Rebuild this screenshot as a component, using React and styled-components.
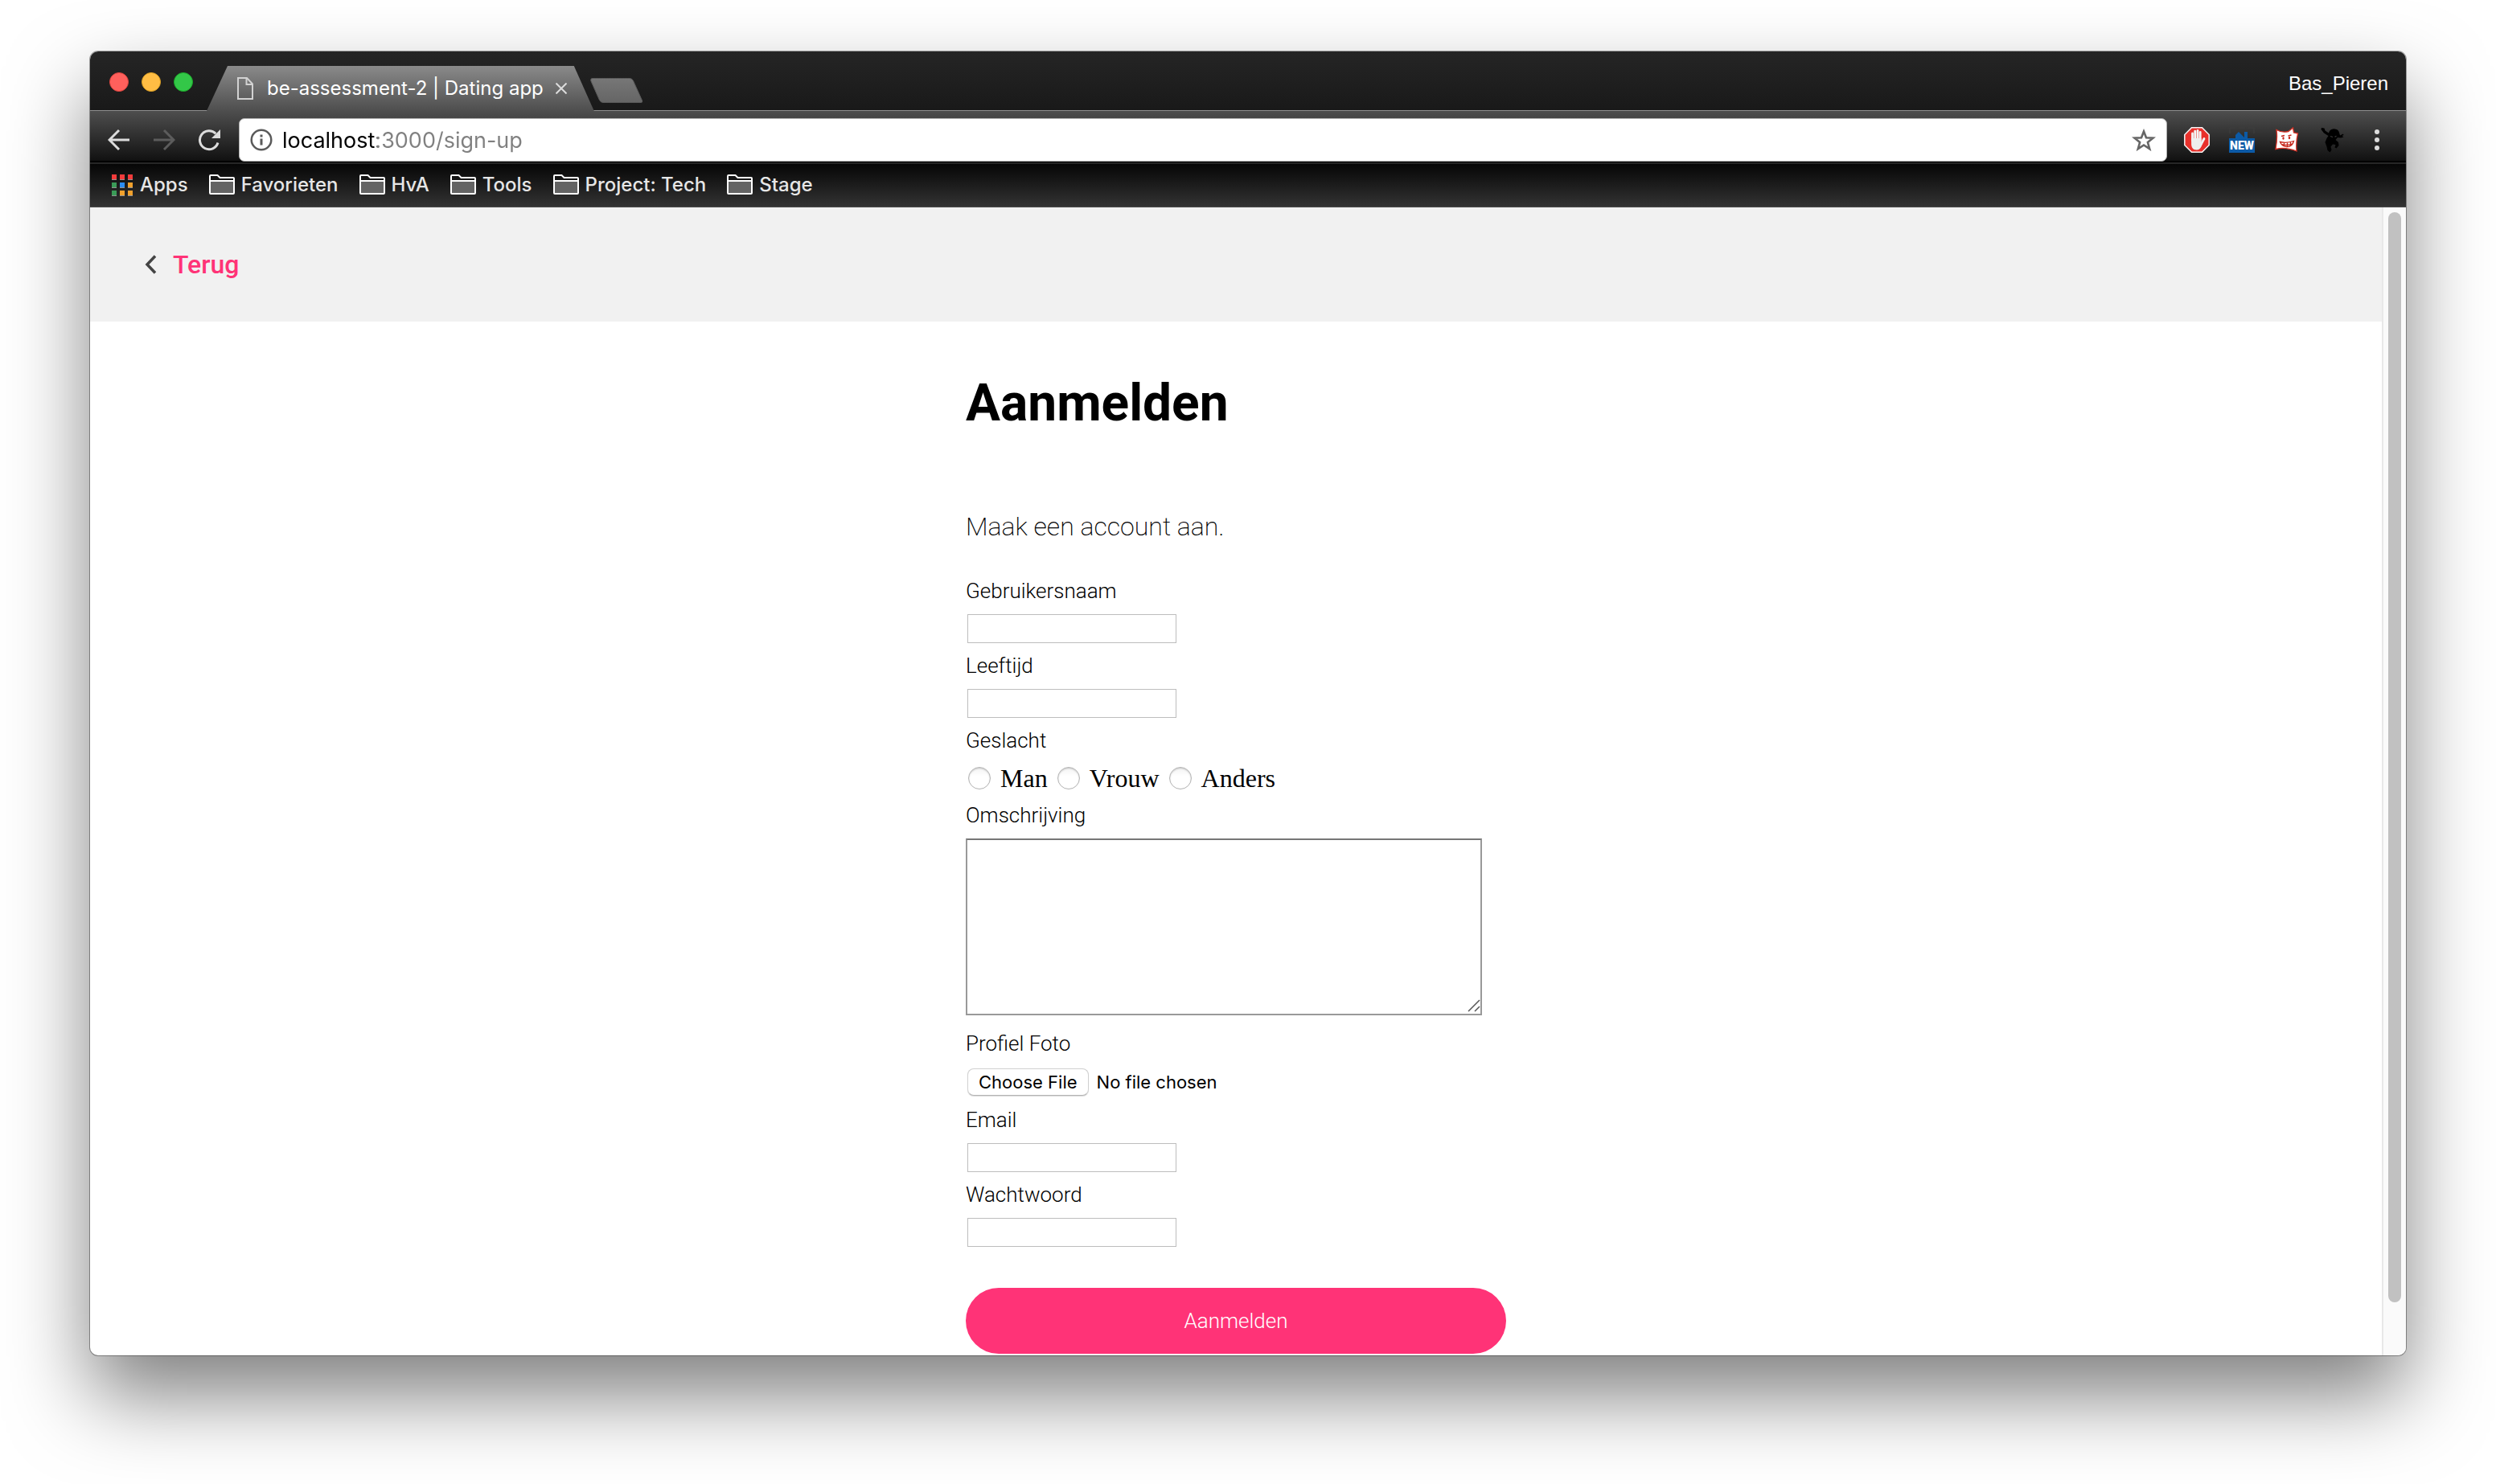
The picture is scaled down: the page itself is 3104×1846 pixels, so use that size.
import React from "react";
import styled, { createGlobalStyle } from "styled-components";

const UI = `Inter, Roboto, "Liberation Sans", sans-serif`;
const BODY = `Roboto, "Liberation Sans", sans-serif`;

const GlobalStyle = createGlobalStyle`
  *, *::before, *::after { box-sizing: border-box; }
  body { margin: 0; background: #fff; }
  button { margin: 0; padding: 0; border: 0; background: none; font: inherit; }
  svg { display: block; flex: none; }
`;

/* ---------- window ---------- */

const Desktop = styled.div`
  padding: 64px 112px 160px;
`;

const Window = styled.div`
  display: flex;
  flex-direction: column;
  overflow: hidden;
  border-radius: 10px;
  background: #fff;
  box-shadow: 0 0 0 1px rgba(0, 0, 0, 0.35), 0 50px 100px rgba(0, 0, 0, 0.5);
`;

const TitleBar = styled.header`
  display: flex;
  align-items: flex-end;
  height: 74px;
  padding: 0 22px 0 24px;
  background:
    linear-gradient(#8f8f8f, #8f8f8f) bottom / 100% 1px no-repeat,
    linear-gradient(#252525, #191919);
`;

const Lights = styled.div`
  display: flex;
  gap: 16px;
  padding-bottom: 24px;
`;

const Light = styled.button`
  width: 24px;
  height: 24px;
  border-radius: 50%;
  background: ${(p) => p.$fill};
  border: 1px solid ${(p) => p.$edge};
`;

const Tab = styled.div`
  display: flex;
  align-items: center;
  height: 56px;
  margin-left: 17px;
  padding: 0 34px 0 38px;
  background: linear-gradient(#8a8a8a, #4e4e4e);
  clip-path: polygon(26px 0, calc(100% - 25px) 0, 100% 100%, 0 100%);
  color: #fff;
  font: 400 24px/30px ${UI};
`;

const TabTitle = styled.span`
  margin: 0 15px 0 17px;
  white-space: nowrap;
`;

const NewTab = styled.button`
  margin-left: -5px;
  padding-bottom: 10px;
`;

const Profile = styled.button`
  margin-left: auto;
  padding-bottom: 20px;
  color: #fff;
  font: 400 24px/28px "Liberation Sans", Arial, sans-serif;
`;

const Toolbar = styled.nav`
  display: flex;
  align-items: center;
  height: 64px;
  padding: 8px 32px 0 22px;
  background: linear-gradient(#4e4e4e, #111 62px, #000 62px);
`;

const NavButtons = styled.div`
  display: flex;
  gap: 28px;
  margin-right: 23px;
`;

const Omnibox = styled.div`
  flex: 1;
  display: flex;
  align-items: center;
  gap: 12px;
  height: 54px;
  padding: 0 13px;
  border: 1px solid #b0b0b0;
  border-radius: 7px;
  background: #fff;
`;

const Address = styled.input`
  flex: 1;
  min-width: 0;
  padding: 2px 0 0;
  border: 0;
  outline: 0;
  font: 400 27px/34px ${UI};
  color: #000;
  background: linear-gradient(90deg, #000 118px, #808080 118px);
  background-clip: text;
  -webkit-background-clip: text;
  -webkit-text-fill-color: transparent;
`;

const Extensions = styled.div`
  display: flex;
  gap: 24px;
  margin: 0 36px 0 21px;
`;

const Bookmarks = styled.nav`
  display: flex;
  align-items: center;
  gap: 26px;
  height: 56px;
  padding: 0 26px 2px;
  border-top: 2px solid #262626;
  border-bottom: 1px solid #4c4c4c;
  background: linear-gradient(#060606, #333);
`;

const Bookmark = styled.a`
  display: flex;
  align-items: center;
  gap: 8px;
  color: #e6e6e6;
  font: 500 24px/30px ${UI};
  text-decoration: none;
  white-space: nowrap;
`;

/* ---------- page ---------- */

const Viewport = styled.div`
  display: flex;
`;

const Page = styled.div`
  flex: 1;
  min-width: 0;
  padding-bottom: 2px;
`;

const ScrollTrack = styled.div`
  width: 30px;
  padding: 6px 6px 0;
  border-left: 2px solid #e8e8e8;
  background: #fafafa;
`;

const ScrollThumb = styled.div`
  width: 16px;
  height: calc(100% - 66px);
  border-radius: 8px;
  background: #c1c1c1;
`;

const PageHeader = styled.header`
  display: flex;
  align-items: center;
  height: 142px;
  padding: 0 68px;
  background: #f1f1f1;
`;

const BackLink = styled.a`
  display: flex;
  align-items: center;
  gap: 20px;
  color: #ff3377;
  font: 500 32px/38px ${BODY};
  text-decoration: none;
`;

const Main = styled.main`
  max-width: 672px;
  margin: 0 auto;
  padding-top: 64px;
`;

const Title = styled.h1`
  margin: 0 0 96px;
  font: 700 64px/76px ${BODY};
  color: #000;
`;

const Intro = styled.p`
  margin: 0 0 46px;
  font: 200 32px/38px ${BODY};
  color: #000;
`;

const Form = styled.form`
  display: flex;
  flex-direction: column;
`;

const Field = styled.div`
  display: flex;
  flex-direction: column;
  align-items: flex-start;
  gap: 14px;
  margin-bottom: ${(p) => p.$space || 13}px;
`;

const Label = styled.label`
  font: 350 26px/30px ${BODY};
  color: #000;
`;

const TextInput = styled.input`
  width: 260px;
  height: 36px;
  margin: 0 2px;
  padding: 2px;
  border: 1px solid #bdbdbd;
  border-radius: 0;
  background: #fff;
  font: 400 22px/26px ${UI};
`;

const Options = styled.div`
  display: flex;
  align-items: center;
  gap: 12px;
  height: 36px;
  padding-left: 3px;
`;

const Option = styled.label`
  display: flex;
  align-items: center;
  gap: 12px;
  font: 400 32px/36px "Liberation Serif", "Times New Roman", serif;
  color: #000;
`;

const Radio = styled.input`
  appearance: none;
  width: 28px;
  height: 28px;
  margin: 0;
  border: 1px solid #b4b4b4;
  border-radius: 50%;
  background: linear-gradient(#f3f3f3, #fff 40%);
  box-shadow: inset 0 1px 2px rgba(0, 0, 0, 0.2);
  &:checked { background: radial-gradient(#333 30%, #fff 34%); }
`;

const TextArea = styled.textarea`
  display: block;
  width: 642px;
  height: 220px;
  margin: 0;
  padding: 4px;
  border: 2px solid #999;
  border-top-color: #767676;
  border-radius: 0;
  background: #fff;
  resize: none;
  font: 400 22px/26px ${UI};
`;

const AreaWrap = styled.div`
  position: relative;
`;

const Grip = styled.svg`
  position: absolute;
  right: 2px;
  bottom: 4px;
`;

const FileInput = styled.input`
  height: 38px;
  margin: 0 2px;
  color: #000;
  font: 400 22px/38px ${UI};
  &::file-selector-button {
    height: 34px;
    margin: 0 10px 0 0;
    padding: 0 13px;
    border: 1px solid #d0d0d0;
    border-bottom-color: #b4b4b4;
    border-radius: 8px;
    background: #fff;
    box-shadow: 0 1px 1px rgba(0, 0, 0, 0.15);
    color: #000;
    font: 400 22px/30px ${UI};
  }
`;

const Submit = styled.button`
  height: 82px;
  margin-top: 38px;
  border-radius: 41px;
  background: #ff3377;
  color: #fff;
  font: 350 26px/30px ${BODY};
`;

/* ---------- icons ---------- */

const DocIcon = () => (
  <svg width="20" height="28" viewBox="0 0 20 28" fill="none" stroke="#d2d2d2" strokeWidth="2">
    <path d="M1 1H12L19 8.500V27H1Z" />
    <path d="M11.500 1V9H19" />
  </svg>
);

const CloseIcon = () => (
  <svg width="14" height="14" viewBox="0 0 14 14" stroke="#dcdcdc" strokeWidth="2">
    <path d="M0.500 0.500L13.500 13.500M13.500 0.500L0.500 13.500" />
  </svg>
);

const NewTabShape = () => (
  <svg width="66" height="31" viewBox="0 0 66 31">
    <defs>
      <linearGradient id="nt" x1="0" y1="0" x2="0" y2="1">
        <stop offset="0" stopColor="#777" />
        <stop offset="1" stopColor="#656565" />
      </linearGradient>
    </defs>
    <path d="M3 0.500H49Q52 0.500 53.500 3.500L64.500 28Q65.500 30.500 63 30.500H16Q13 30.500 11.500 27.500L1 4Q-0.200 0.500 3 0.500Z" fill="url(#nt)" stroke="#5a5a5a" />
  </svg>
);

const ArrowIcon = ({ forward }) => (
  <svg width="28" height="28" viewBox="0 0 28 28" fill="none" stroke={forward ? "#5c5c5c" : "#dcdcdc"} strokeWidth="3">
    {forward ? (
      <path d="M1 14H26M14 2L26 14L14 26" />
    ) : (
      <path d="M27 14H2M14 2L2 14L14 26" />
    )}
  </svg>
);

const ReloadIcon = () => (
  <svg width="28" height="28" viewBox="0 0 28 28">
    <path d="M22.300 6.300A11.500 11.500 0 1 0 25 17.500" fill="none" stroke="#dcdcdc" strokeWidth="3" />
    <path d="M28 1V12H17Z" fill="#dcdcdc" />
  </svg>
);

const InfoIcon = () => (
  <svg width="28" height="28" viewBox="0 0 28 28">
    <circle cx="14" cy="14" r="12.300" fill="none" stroke="#5a5a5a" strokeWidth="2.500" />
    <path d="M12.500 7.500h3v3h-3zM12.500 12.500h3v8h-3z" fill="#5a5a5a" />
  </svg>
);

const StarIcon = () => (
  <svg width="30" height="28" viewBox="0 0 30 28">
    <path d="M15 3.500L18 11.300L26.500 11.700L19.900 17L22.200 25.200L15 20.500L7.800 25.200L10.100 17L3.500 11.700L12 11.300Z" fill="none" stroke="#666" strokeWidth="2.600" />
  </svg>
);

const BlockIcon = () => (
  <svg width="32" height="32" viewBox="0 0 32 32">
    <path d="M9.500 0.800H22.500L31.200 9.500V22.500L22.500 31.200H9.500L0.800 22.500V9.500Z" fill="#e8302b" stroke="#f4f4f4" strokeWidth="1.500" />
    <g stroke="#f3f3f3" strokeWidth="2.800" strokeLinecap="round" fill="none">
      <path d="M10.500 17V8M13.700 15V5.200M17 15V4.500M20.200 16V6.500" />
      <path d="M21.500 21L25 14.500" />
    </g>
    <path d="M9.100 14H21.600V18.500L23.800 17.500C22.800 22 21 28.500 15.800 28.500C11 28.500 9.100 25 9.100 21Z" fill="#eee" />
  </svg>
);

const NewBadgeIcon = () => (
  <svg width="32" height="32" viewBox="0 0 32 32">
    <path d="M1 8V1H8M12 1H20M24 1H31V8" fill="none" stroke="#3c3c3c" strokeWidth="1.500" />
    <path d="M8 14V10L12 6L19 13V6H23V14Z" fill="#0c5aa6" />
    <rect y="14" width="32" height="18" fill="#0c5aa6" />
    <text x="16" y="28" textAnchor="middle" fill="#fff" fontFamily="Roboto, sans-serif" fontWeight="900" fontSize="14">NEW</text>
  </svg>
);

const GrinIcon = () => (
  <svg width="32" height="32" viewBox="0 0 32 32">
    <path d="M3 3.500Q10 7.500 18 5.500L23.500 1L24.500 7L29.500 8Q27 18 28 30Q14 24.500 2 27.500Q4.500 14 3 3.500Z" fill="#fff" stroke="#d93025" strokeWidth="1.300" />
    <g fill="none" stroke="#c6281d" strokeWidth="1.300">
      <path d="M9 11.500L13 10.500M17.500 11L21.500 10" />
      <path d="M7.500 18.500Q15 20.500 24.500 17.500Q22.500 25 15.500 24.500Q9.500 24 7.500 18.500ZM9.500 21.500Q16 23.500 23 20.800M12.500 19.500V23.500M16.500 19.500V24.300M20.500 18.800V23" />
    </g>
    <ellipse cx="11.500" cy="14" rx="1.200" ry="1.800" fill="#c6281d" />
    <ellipse cx="19" cy="13.500" rx="1.200" ry="1.800" fill="#c6281d" />
  </svg>
);

const NinjaIcon = () => (
  <svg width="32" height="32" viewBox="0 0 32 32">
    <path d="M3 1L6.500 1.500L7.500 4.500L12 7.500Q13 2.500 18.500 2.200Q24 2.500 25 7L26 10.500L30 8.500L30.500 10L28.500 11L30.500 12.500L27 13.500L23 13Q21.500 15 20.500 16L24 19L24.500 23L21.500 26.500L19.500 25.500L20.500 22L17 21.500L14.500 24.500L15.500 28.500L13.500 31.500L10.500 29L9.500 24.500L7.500 19L9.500 14L11.500 11L6 7.500L2.500 3Z" fill="#000" />
    <path d="M14 11.500L17 12.500M19.500 12.300L21.500 11.300" stroke="#3a3a3a" strokeWidth="1.200" />
  </svg>
);

const MenuIcon = () => (
  <svg width="8" height="28" viewBox="0 0 8 28" fill="#dcdcdc">
    <circle cx="4" cy="4" r="3" />
    <circle cx="4" cy="14" r="3" />
    <circle cx="4" cy="24" r="3" />
  </svg>
);

const APP_COLORS = ["#f23b3b", "#f23b3b", "#f23b3b", "#3a9b57", "#2b8cf2", "#f0a02c", "#3a9b57", "#f0a02c", "#f0a02c"];

const AppsIcon = () => (
  <svg width="28" height="28" viewBox="0 0 28 28">
    {APP_COLORS.map((c, i) => (
      <g key={i}>
        <rect x={1 + (i % 3) * 10} y={1 + Math.floor(i / 3) * 10} width="6" height="6" fill={c} />
        <rect x={1 + (i % 3) * 10} y={7 + Math.floor(i / 3) * 10} width="6" height="1" fill="#909090" />
      </g>
    ))}
  </svg>
);

const FolderIcon = () => (
  <svg width="32" height="25" viewBox="0 0 32 25">
    <rect x="2" y="9" width="28" height="14" fill="#636363" />
    <path d="M1 23V2Q1 1 2 1H10.500L13.500 4H30Q31 4 31 5V23Q31 24 30 24H2Q1 24 1 23ZM1 8H31" fill="none" stroke="#fff" strokeWidth="2" />
  </svg>
);

const ChevronIcon = () => (
  <svg width="15" height="24" viewBox="0 0 15 24">
    <path d="M13 1.500L3 12L13 22.500" fill="none" stroke="#444" strokeWidth="3.500" />
  </svg>
);

/* ---------- app ---------- */

const FOLDERS = ["Favorieten", "HvA", "Tools", "Project: Tech", "Stage"];
const GENDERS = ["Man", "Vrouw", "Anders"];

const TextField = ({ id, label, type = "text" }) => (
  <Field>
    <Label htmlFor={id}>{label}</Label>
    <TextInput id={id} name={id} type={type} />
  </Field>
);

export default function App() {
  return (
    <Desktop>
      <GlobalStyle />
      <Window>
        <TitleBar>
          <Lights>
            <Light aria-label="Close window" $fill="#ff605c" $edge="#e0443e" />
            <Light aria-label="Minimize window" $fill="#ffbd44" $edge="#dea123" />
            <Light aria-label="Zoom window" $fill="#33c748" $edge="#1aab29" />
          </Lights>
          <Tab>
            <DocIcon />
            <TabTitle>be-assessment-2 | Dating app</TabTitle>
            <button aria-label="Close tab"><CloseIcon /></button>
          </Tab>
          <NewTab aria-label="New tab"><NewTabShape /></NewTab>
          <Profile>Bas_Pieren</Profile>
        </TitleBar>

        <Toolbar>
          <NavButtons>
            <button aria-label="Back"><ArrowIcon /></button>
            <button aria-label="Forward"><ArrowIcon forward /></button>
            <button aria-label="Reload"><ReloadIcon /></button>
          </NavButtons>
          <Omnibox>
            <InfoIcon />
            <Address aria-label="Address" defaultValue="localhost:3000/sign-up" spellCheck={false} />
            <button aria-label="Bookmark this page"><StarIcon /></button>
          </Omnibox>
          <Extensions>
            <button aria-label="Ad blocker"><BlockIcon /></button>
            <button aria-label="New items"><NewBadgeIcon /></button>
            <button aria-label="Grin"><GrinIcon /></button>
            <button aria-label="Ninja"><NinjaIcon /></button>
          </Extensions>
          <button aria-label="Menu"><MenuIcon /></button>
        </Toolbar>

        <Bookmarks>
          <Bookmark href="#apps"><AppsIcon />Apps</Bookmark>
          {FOLDERS.map((name) => (
            <Bookmark key={name} href="#folder"><FolderIcon />{name}</Bookmark>
          ))}
        </Bookmarks>

        <Viewport>
          <Page>
            <PageHeader>
              <BackLink href="#terug"><ChevronIcon />Terug</BackLink>
            </PageHeader>
            <Main>
              <Title>Aanmelden</Title>
              <Intro>Maak een account aan.</Intro>
              <Form onSubmit={(e) => e.preventDefault()}>
                <TextField id="gebruikersnaam" label="Gebruikersnaam" />
                <TextField id="leeftijd" label="Leeftijd" />
                <Field role="radiogroup" aria-labelledby="geslacht">
                  <Label as="span" id="geslacht">Geslacht</Label>
                  <Options>
                    {GENDERS.map((g) => (
                      <Option key={g}>
                        <Radio type="radio" name="geslacht" value={g} />
                        {g}
                      </Option>
                    ))}
                  </Options>
                </Field>
                <Field $space={20}>
                  <Label htmlFor="omschrijving">Omschrijving</Label>
                  <AreaWrap>
                    <TextArea id="omschrijving" name="omschrijving" />
                    <Grip width="16" height="16" viewBox="0 0 16 16" stroke="#555" strokeWidth="1.500">
                      <path d="M1 15L15 1M9 15L15 9" />
                    </Grip>
                  </AreaWrap>
                </Field>
                <Field>
                  <Label htmlFor="foto">Profiel Foto</Label>
                  <FileInput id="foto" name="foto" type="file" />
                </Field>
                <TextField id="email" label="Email" type="email" />
                <TextField id="wachtwoord" label="Wachtwoord" type="password" />
                <Submit type="submit">Aanmelden</Submit>
              </Form>
            </Main>
          </Page>
          <ScrollTrack><ScrollThumb /></ScrollTrack>
        </Viewport>
      </Window>
    </Desktop>
  );
}
